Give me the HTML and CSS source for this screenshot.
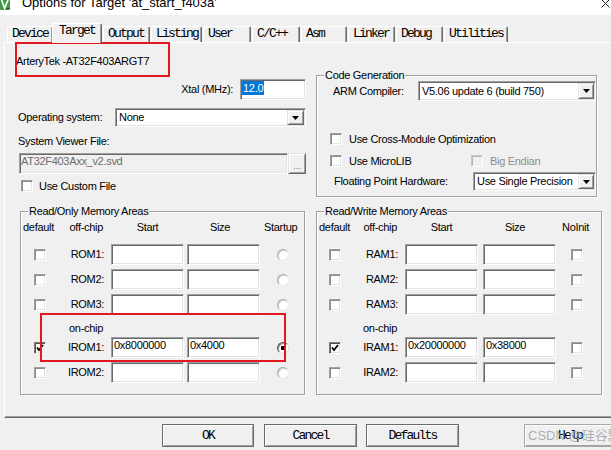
FILE: index.html
```html
<!DOCTYPE html>
<html lang="en">
<head>
<meta charset="utf-8">
<title>Options for Target</title>
<link rel="stylesheet" href="styles.css">
</head>
<body>
<div class="win">
  <div class="titlebar">
    <svg class="appicon" width="10" height="10" viewBox="0 0 10 10"><rect x="0" y="-3" width="10" height="13" rx="1" fill="#3f9a45"/><path d="M1.2 -1 L4.6 8.2 L8.6 -1.5" fill="none" stroke="#fff" stroke-width="1.7"/><path d="M6.5 8.5 L9.5 8.5" stroke="#1e5a2c" stroke-width="1"/></svg>
    <span class="title">Options for Target 'at_start_f403a'</span>
    <svg class="close" width="9" height="9" viewBox="0 0 9 9"><path d="M0.5 0.5 L8.5 8.5 M8.5 0.5 L0.5 8.5" stroke="#222" stroke-width="1" fill="none"/></svg>
  </div>

  <div class="tabs">
    <div class="tab w46">Device</div>
    <div class="tab active">Target</div>
    <div class="tab w47">Output</div>
    <div class="tab w51">Listing</div>
    <div class="tab w48">User</div>
    <div class="tab w48">C/C++</div>
    <div class="tab w46">Asm</div>
    <div class="tab w47">Linker</div>
    <div class="tab w47">Debug</div>
    <div class="tab w64">Utilities</div>
  </div>

  <div class="panel">
    <div class="top">
      <div class="leftcol">
        <div class="devname">ArteryTek -AT32F403ARGT7</div>
        <div class="xtal-row"><span>Xtal (MHz):</span><div class="edit xtal"><span class="hl">12.0</span></div></div>
        <div class="os-row">
          <span>Operating system:</span>
          <div class="combo os-combo"><span class="cval">None</span><span class="ddbtn"><svg width="7" height="4" viewBox="0 0 7 4"><polygon points="0,0 7,0 3.5,4" fill="#000"/></svg></span></div>
        </div>
        <div class="svf-label">System Viewer File:</div>
        <div class="svf-row"><div class="edit disabled svf">AT32F403Axx_v2.svd</div><div class="dots">...</div></div>
        <div class="chk-row custom"><span class="chk"></span><span>Use Custom File</span></div>
      </div>

      <div class="group codegen">
        <span class="legend">Code Generation</span>
        <div class="cg-row compiler">
          <span class="lbl">ARM Compiler:</span>
          <div class="combo cg-combo"><span class="cval">V5.06 update 6 (build 750)</span><span class="ddbtn"><svg width="7" height="4" viewBox="0 0 7 4"><polygon points="0,0 7,0 3.5,4" fill="#000"/></svg></span></div>
        </div>
        <div class="chk-row cmo"><span class="chk"></span><span>Use Cross-Module Optimization</span></div>
        <div class="chk-row micro">
          <span class="chk-item first"><span class="chk"></span><span>Use MicroLIB</span></span>
          <span class="chk-item dis"><span class="chk"></span><span>Big Endian</span></span>
        </div>
        <div class="cg-row fph">
          <span class="lbl">Floating Point Hardware:</span>
          <div class="combo fph-combo"><span class="cval">Use Single Precision</span><span class="ddbtn"><svg width="7" height="4" viewBox="0 0 7 4"><polygon points="0,0 7,0 3.5,4" fill="#000"/></svg></span></div>
        </div>
      </div>
    </div>

    <div class="mem">
      <div class="group ro">
        <span class="legend">Read/Only Memory Areas</span>
        <div class="memgrid">
          <span class="h c1">default</span><span class="h c2">off-chip</span><span class="h c3">Start</span><span class="h c4">Size</span><span class="h c5">Startup</span>

          <span class="chk c1"></span><span class="rl c2">ROM1:</span><div class="edit c3"></div><div class="edit c4"></div><span class="radio c5"></span>
          <span class="chk c1"></span><span class="rl c2">ROM2:</span><div class="edit c3"></div><div class="edit c4"></div><span class="radio c5"></span>
          <span class="chk c1"></span><span class="rl c2">ROM3:</span><div class="edit c3"></div><div class="edit c4"></div><span class="radio c5"></span>

          <span class="rl onchip c2">on-chip</span>

          <span class="chk c1 checked"><svg width="8" height="8" viewBox="0 0 8 8"><path d="M1 3.5 L3 6 L7 1" fill="none" stroke="#000" stroke-width="1.8"/></svg></span><span class="rl c2">IROM1:</span><div class="edit c3"><span class="val">0x8000000</span></div><div class="edit c4"><span class="val">0x4000</span></div><span class="radio c5 on"></span>
          <span class="chk c1"></span><span class="rl c2">IROM2:</span><div class="edit c3"></div><div class="edit c4"></div><span class="radio c5"></span>
        </div>
      </div>

      <div class="group rw">
        <span class="legend">Read/Write Memory Areas</span>
        <div class="memgrid">
          <span class="h c1">default</span><span class="h c2">off-chip</span><span class="h c3">Start</span><span class="h c4">Size</span><span class="h c5">NoInit</span>

          <span class="chk c1"></span><span class="rl c2">RAM1:</span><div class="edit c3"></div><div class="edit c4"></div><span class="chk c5"></span>
          <span class="chk c1"></span><span class="rl c2">RAM2:</span><div class="edit c3"></div><div class="edit c4"></div><span class="chk c5"></span>
          <span class="chk c1"></span><span class="rl c2">RAM3:</span><div class="edit c3"></div><div class="edit c4"></div><span class="chk c5"></span>

          <span class="rl onchip c2">on-chip</span>

          <span class="chk c1 checked"><svg width="8" height="8" viewBox="0 0 8 8"><path d="M1 3.5 L3 6 L7 1" fill="none" stroke="#000" stroke-width="1.8"/></svg></span><span class="rl c2">IRAM1:</span><div class="edit c3"><span class="val">0x20000000</span></div><div class="edit c4"><span class="val">0x38000</span></div><span class="chk c5"></span>
          <span class="chk c1"></span><span class="rl c2">IRAM2:</span><div class="edit c3"></div><div class="edit c4"></div><span class="chk c5"></span>
        </div>
      </div>
    </div>
  </div>

  <div class="buttons">
    <div class="pbtn ok">OK</div>
    <div class="pbtn cancel">Cancel</div>
    <div class="pbtn defaults">Defaults</div>
    <div class="pbtn help">Help</div>
  </div>

  <div class="mark mark-name"></div>
  <div class="mark mark-irom"></div>
  <div class="watermark">CSDN @硅谷默</div>
</div>
</body>
</html>
```

FILE: styles.css
```css
* { box-sizing: border-box; }

html, body { margin: 0; padding: 0; }

body {
  width: 611px;
  height: 450px;
  overflow: hidden;
  background: #f0f0f0;
  color: #000;
  font-family: "Liberation Sans", Arial, sans-serif;
  font-size: 11px;
  line-height: 13px;
  letter-spacing: -0.3px;
}

.win {
  position: relative;
  width: 611px;
  height: 450px;
  overflow: hidden;
}

/* ---------- title bar ---------- */
.titlebar {
  height: 15px;
  background: #fff;
  display: flex;
  align-items: flex-start;
}
.appicon { flex: none; }
.title {
  margin-left: 12px;
  margin-top: -5px;
  font-size: 13px;
  line-height: 15px;
  letter-spacing: 0;
  white-space: nowrap;
}
.close { margin-left: auto; margin-right: 1px; margin-top: -1px; flex: none; }

/* ---------- tabs ---------- */
.tabs {
  height: 27px;
  display: flex;
  align-items: flex-end;
  padding-left: 7px;
  position: relative;
  z-index: 1;
}
.tab {
  height: 16px;
  margin-right: 1px;
  padding-left: 4px;
  background: #f0f0f0;
  border-top: 1px solid #fff;
  border-left: 1px solid #fff;
  border-right: 1px solid #696969;
  border-radius: 2px 2px 0 0;
  box-shadow: inset -1px 0 #a0a0a0;
  font-family: "Liberation Mono", monospace;
  font-size: 13px;
  line-height: 14px;
  letter-spacing: -1.8px;
  white-space: nowrap;
  flex: none;
}
.w46 { width: 46px; }
.w47 { width: 47px; }
.w48 { width: 48px; }
.w51 { width: 51px; }
.w64 { width: 64px; }
.tab.active {
  width: 50px;
  height: 20px;
  margin-left: -2px;
  margin-bottom: -1px;
  padding-left: 6px;
}

/* ---------- panel ---------- */
.panel {
  margin-left: 4px;
  width: 620px;
  height: 376px;
  border-top: 1px solid #fff;
  border-left: 1px solid #fff;
  border-bottom: 1px solid #696969;
  box-shadow: inset 0 -1px #a0a0a0;
}

.top {
  height: 168px;
  display: flex;
  align-items: flex-start;
}

.leftcol {
  width: 289px;
  margin-left: 12px;
  flex: none;
}
.devname {
  height: 36px;
  padding-top: 12px;
  margin-left: -1px;
}
.xtal-row {
  height: 21px;
  display: flex;
  justify-content: flex-end;
  align-items: center;
  gap: 7px;
}
.os-row {
  margin-top: 8px;
  height: 19px;
  display: flex;
  align-items: center;
  padding-left: 1px;
}
.svf-label { margin-top: 8px; padding-left: 1px; }
.svf-row {
  margin-top: 5px;
  height: 21px;
  display: flex;
  padding-left: 2px;
}

/* sunken edit */
.edit {
  height: 21px;
  background: #fff;
  border: 1px solid;
  border-color: #a0a0a0 #fff #fff #a0a0a0;
  padding: 1px 1px 0 1px;
  box-shadow: inset 1px 1px #696969, inset -1px -1px #e3e3e3;
  white-space: nowrap;
  overflow: hidden;
}
.xtal { width: 66px; }
.hl {
  display: inline-block;
  background: #0078d7;
  color: #fff;
  line-height: 14px;
  padding: 0 1px;
}
.svf { width: 269px; }
.edit.disabled { background: #f0f0f0; color: #6d6d6d; }

.dots {
  width: 18px;
  height: 21px;
  border: 1px solid;
  border-color: #e3e3e3 #696969 #696969 #e3e3e3;
  box-shadow: inset 1px 1px #fff, inset -1px -1px #a0a0a0;
  color: #7a7a7a;
  font-size: 9px;
  letter-spacing: 0;
  text-align: center;
  line-height: 9px;
  padding-top: 8px;
}

/* combo box */
.combo {
  display: flex;
  background: #fff;
  border: 1px solid;
  border-color: #a0a0a0 #fff #fff #a0a0a0;
  padding: 1px;
  box-shadow: inset 1px 1px #696969, inset -1px -1px #e3e3e3;
}
.cval {
  flex: 1;
  align-self: center;
  padding-left: 2px;
  white-space: nowrap;
  overflow: hidden;
}
.ddbtn {
  width: 16px;
  flex: none;
  display: flex;
  align-items: center;
  justify-content: center;
  background: #f0f0f0;
  border: 1px solid;
  border-color: #e3e3e3 #696969 #696969 #e3e3e3;
  box-shadow: inset 1px 1px #fff, inset -1px -1px #a0a0a0;
}
.os-combo { width: 191px; height: 19px; margin-left: auto; }
.os-combo .ddbtn { width: 17px; }
.cg-combo { width: 178px; height: 20px; margin-left: auto; }
.fph-combo { width: 123px; height: 19px; margin-left: auto; }

/* checkbox / radio */
.chk {
  width: 12px;
  height: 12px;
  flex: none;
  display: flex;
  align-items: center;
  justify-content: center;
  background: #fff;
  border: 1px solid;
  border-color: #a0a0a0 #fff #fff #a0a0a0;
  box-shadow: inset 1px 1px #8a8a8a, inset -1px -1px #e3e3e3;
}
.chk.checked {
  border-color: #7a7a7a #fff #fff #7a7a7a;
  box-shadow: inset 1px 1px #505050, inset -1px -1px #e3e3e3;
}
.radio {
  width: 12px;
  height: 12px;
  border-radius: 50%;
  background: #fff;
  border: 1px solid;
  border-color: #a8a8a8 #e8e8e8 #e8e8e8 #a8a8a8;
  box-shadow: inset 1px 1px #d0d0d0;
}
.radio.on {
  border-color: #555 #e0e0e0 #e0e0e0 #555;
  box-shadow: inset 1px 1px #909090;
  background: radial-gradient(circle at 50% 50%, #000 0, #000 2px, #fff 2.5px);
}

.chk-row {
  height: 12px;
  display: flex;
  align-items: center;
  gap: 7px;
}
.custom { margin-top: 6px; padding-left: 4px; gap: 6px; }

/* ---------- group boxes ---------- */
.group {
  position: relative;
  flex: none;
  border: 1px solid #a0a0a0;
  box-shadow: inset 1px 1px #fff, 1px 1px #fff;
}
.legend {
  position: absolute;
  top: -7px;
  left: 7px;
  padding: 0 1px;
  background: #f0f0f0;
  white-space: nowrap;
}

.codegen {
  width: 281px;
  height: 122px;
  margin-top: 32px;
  margin-left: 10px;
  padding-top: 5px;
}
.cg-row { display: flex; align-items: center; }
.compiler { height: 20px; }
.compiler .lbl { padding-left: 16px; }
.cmo { margin-top: 32px; padding-left: 13px; }
.micro { margin-top: 10px; padding-left: 13px; gap: 0; }
.chk-item { display: flex; align-items: center; gap: 7px; }
.chk-item.first { width: 141px; }
.chk-item.dis { color: #8d8d8d; }
.chk-item.dis .chk {
  background: #f0f0f0;
  border-color: #c8c8c8 #fff #fff #c8c8c8;
  box-shadow: inset 1px 1px #b8b8b8;
}
.fph { margin-top: 5px; height: 19px; }
.fph .lbl { padding-left: 17px; }

/* ---------- memory areas ---------- */
.mem { display: flex; }
.ro { width: 285px; height: 184px; margin-left: 15px; }
.rw { width: 286px; height: 184px; margin-left: 11px; }

.memgrid {
  display: grid;
  grid-template-rows: 21px 21px 21px 21px 14px 21px 21px;
  row-gap: 4px;
  align-items: center;
  padding-top: 7px;
}
.ro .memgrid { grid-template-columns: 38px 52px 73px 76px 1fr; }
.rw .memgrid { grid-template-columns: 36px 52px 73px 78px 1fr; }

.c1 { grid-column: 1; justify-self: center; }
.c2 { grid-column: 2; }
.c3 { grid-column: 3; }
.c4 { grid-column: 4; }
.c5 { grid-column: 5; justify-self: start; }

.memgrid .edit { width: 73px; }
.memgrid .edit.c4 { justify-self: end; }
.val { display: block; padding-left: 1px; }

.h { align-self: start; padding-top: 2px; white-space: nowrap; }
.h.c1 { justify-self: start; margin-left: 2px; }
.h.c2 { justify-self: end; padding-right: 8px; }
.h.c3 { justify-self: center; }
.h.c4 { justify-self: center; padding-right: 4px; }
.ro .h.c5 { margin-left: 4px; }
.rw .h.c5 { margin-left: 6px; }
.ro .radio.c5 { margin-left: 17px; }
.rw .chk.c5 { margin-left: 15px; }
.rw .chk.c1 { justify-self: start; margin-left: 12px; }
.ro .chk.c1 { justify-self: start; margin-left: 13px; }

.rl { justify-self: end; padding-right: 7px; white-space: nowrap; }
.onchip { align-self: end; margin-bottom: -2px; padding-right: 8px; }

/* ---------- bottom buttons ---------- */
.buttons {
  display: flex;
  margin-top: 6px;
  padding-left: 162px;
}
.pbtn {
  height: 23px;
  flex: none;
  display: flex;
  align-items: center;
  justify-content: center;
  border: 1px solid #6a6a6a;
  box-shadow: inset 1px 1px #fff, inset -1px -1px #a0a0a0;
  font-family: "Liberation Mono", monospace;
  font-size: 13px;
  letter-spacing: -1.8px;
}
.ok { width: 92px; margin-right: 10px; }
.cancel { width: 93px; margin-right: 9px; }
.defaults { width: 93px; }
.help { width: 92px; margin-left: 65px; border-color: #a8a8a8; }

/* ---------- annotations (overlays) ---------- */
.mark {
  position: absolute;
  border: 2px solid #e2171f;
  pointer-events: none;
}
.mark-name { left: 15px; top: 42px; width: 155px; height: 35px; }
.mark-irom { left: 40px; top: 313px; width: 246px; height: 49px; }

.watermark {
  position: absolute;
  left: 528px;
  top: 428px;
  font-family: "Liberation Sans", "Noto Sans CJK SC", sans-serif;
  font-size: 13px;
  line-height: 15px;
  letter-spacing: 0;
  color: rgba(160, 160, 160, 0.85);
  white-space: nowrap;
}
```
